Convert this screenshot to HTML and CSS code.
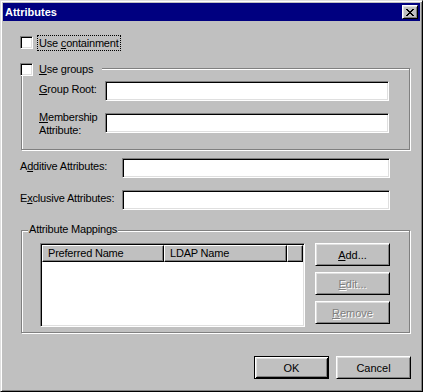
FILE: index.html
```html
<!DOCTYPE html>
<html lang="en">
<head>
  <meta charset="UTF-8" />
  <title>Attributes</title>
  <link rel="stylesheet" href="styles.css">
</head>
<body>
  <div class="window">
    <div class="titlebar">
      <span class="title">Attributes</span>
      <button class="close-btn" type="button">
        <svg width="8" height="7" viewBox="0 0 8 7" shape-rendering="crispEdges">
          <path d="M0 0h2v1H0zM6 0h2v1H6zM1 1h2v1H1zM5 1h2v1H5zM2 2h4v1H2zM3 3h2v1H3zM2 4h4v1H2zM1 5h2v1H1zM5 5h2v1H5zM0 6h2v1H0zM6 6h2v1H6z" fill="#000"/>
        </svg>
      </button>
    </div>

    <div class="dialog">
      <!-- containment -->
      <div class="check-row">
        <input type="checkbox" class="chk">
        <span class="chk-label focus">Use <u>c</u>ontainment</span>
      </div>

      <!-- groups -->
      <div class="group groups-box">
        <div class="check-legend">
          <input type="checkbox" class="chk">
          <span class="chk-label"><u>U</u>se groups</span>
        </div>
        <div class="field-row first">
          <label class="lbl"><u>G</u>roup Root:</label>
          <input type="text" class="edit">
        </div>
        <div class="field-row">
          <label class="lbl two-line"><u>M</u>embership<br>Attribute:</label>
          <input type="text" class="edit">
        </div>
      </div>

      <div class="field-row wide additive">
        <label class="lbl">A<u>d</u>ditive Attributes:</label>
        <input type="text" class="edit">
      </div>
      <div class="field-row wide">
        <label class="lbl">E<u>x</u>clusive Attributes:</label>
        <input type="text" class="edit">
      </div>

      <!-- mappings -->
      <div class="group mappings">
        <div class="text-legend">Attribute Mappings</div>
        <div class="mapping-body">
          <div class="listview">
            <div class="lv-header">
              <div class="lv-col c1">Preferred Name</div>
              <div class="lv-col c2">LDAP Name</div>
              <div class="lv-col c3"></div>
            </div>
          </div>
          <div class="btn-col">
            <button class="btn" type="button"><u>A</u>dd...</button>
            <button class="btn" type="button" disabled><u>E</u>dit...</button>
            <button class="btn" type="button" disabled><u>R</u>emove</button>
          </div>
        </div>
      </div>

      <div class="footer">
        <button class="btn default" type="button">OK</button>
        <button class="btn" type="button">Cancel</button>
      </div>
    </div>
  </div>
</body>
</html>
```

FILE: styles.css
```css
:root {
  --face: #c0c0c0;
  --light: #dfdfdf;
  --shadow: #808080;
  --title: #000080;
}
* { box-sizing: border-box; }
html, body { height: 100%; }
body {
  margin: 0;
  background: var(--face);
  color: #000;
  font-family: "Liberation Sans", Arial, sans-serif;
  font-size: 11px;
  letter-spacing: -0.2px;
}
u { text-decoration: underline; text-underline-offset: 1px; }

.window {
  width: 423px;
  height: 392px;
  display: flex;
  flex-direction: column;
  padding: 2px;
  background: var(--face);
  border: 1px solid;
  border-color: var(--light) #000 #000 var(--light);
  box-shadow: inset 1px 1px #fff, inset -1px -1px var(--shadow);
}

/* caption */
.titlebar {
  height: 18px;
  flex: none;
  display: flex;
  align-items: center;
  justify-content: space-between;
  padding: 0 2px;
  background: var(--title);
  color: #fff;
}
.title { font-weight: bold; line-height: 18px; letter-spacing: 0; }
.close-btn {
  width: 16px;
  height: 14px;
  padding: 0;
  display: flex;
  align-items: center;
  justify-content: center;
  background: var(--face);
  border: 1px solid;
  border-color: #fff #000 #000 #fff;
  box-shadow: inset 1px 1px var(--light), inset -1px -1px var(--shadow);
}

/* body */
.dialog {
  flex: 1;
  display: flex;
  flex-direction: column;
  padding: 14px 10px 0 17px;
}

.check-row { display: flex; align-items: flex-start; height: 16px; }
.chk {
  appearance: none;
  -webkit-appearance: none;
  flex: none;
  width: 13px;
  height: 13px;
  margin: 1px 4px 0 0;
  background: #fff;
  border: 1px solid;
  border-color: var(--shadow) #fff #fff var(--shadow);
  box-shadow: inset 1px 1px #000, inset -1px -1px var(--light);
}
.chk-label {
  line-height: 14px;
  padding: 0 1px;
  border: 1px dotted transparent;
  white-space: nowrap;
}
.chk-label.focus { border-color: #000; }

.group {
  border: 1px solid var(--shadow);
  box-shadow: 1px 1px #fff, inset 1px 1px #fff;
}
.groups-box {
  margin: 17px 0 0 1px;
  padding: 0 20px 16px 17px;
}
.check-legend {
  display: flex;
  align-items: flex-start;
  width: fit-content;
  height: 13px;
  margin: -6px 0 0 -19px;
  padding-right: 7px;
  background: var(--face);
}
.check-legend .chk { margin-top: 0; }
.check-legend .chk-label { margin-top: -2px; }

.field-row { display: flex; align-items: flex-start; margin-top: 12px; }
.field-row.first { margin-top: 5px; }
.lbl {
  flex: none;
  width: 66px;
  padding-top: 2px;
  line-height: 13px;
  white-space: nowrap;
}
.lbl.two-line { padding-top: 0; margin: -2px 0 -4px; }
.field-row.wide { padding-right: 20px; }
.field-row.wide .lbl { width: 102px; }
.field-row.additive { margin-top: 8px; }

.edit {
  flex: 1;
  min-width: 0;
  height: 20px;
  margin: 0;
  padding: 0 2px;
  font: inherit;
  background: #fff;
  border: 1px solid;
  border-color: var(--shadow) #fff #fff var(--shadow);
  box-shadow: inset 1px 1px #000, inset -1px -1px var(--light);
  outline: none;
}

.mappings {
  margin: 20px 0 0 1px;
  padding: 0 19px 5px 18px;
}
.text-legend {
  width: fit-content;
  margin: -8px 0 0 -12px;
  padding: 0 1px;
  line-height: 13px;
  background: var(--face);
}
.mapping-body { display: flex; gap: 10px; margin-top: 7px; }

.listview {
  flex: none;
  width: 265px;
  height: 84px;
  padding: 1px;
  background: #fff;
  border: 1px solid;
  border-color: var(--shadow) #fff #fff var(--shadow);
  box-shadow: inset 1px 1px #000, inset -1px -1px var(--light);
}
.lv-header { display: flex; height: 17px; }
.lv-col {
  height: 17px;
  padding: 0 5px;
  line-height: 15px;
  white-space: nowrap;
  background: var(--face);
  border: 1px solid;
  border-color: #fff #000 #000 #fff;
  box-shadow: inset -1px -1px var(--shadow);
}
.lv-col.c1 { width: 122px; }
.lv-col.c2 { width: 123px; }
.lv-col.c3 { flex: 1; }

.btn-col { margin-left: auto; display: flex; flex-direction: column; gap: 6px; }

.btn {
  width: 75px;
  height: 23px;
  padding: 0;
  font: inherit;
  color: #000;
  background: var(--face);
  border: 1px solid;
  border-color: #fff #000 #000 #fff;
  box-shadow: inset 1px 1px var(--light), inset -1px -1px var(--shadow);
}
.btn:disabled { color: var(--shadow); text-shadow: 1px 1px #fff; }
.btn.default {
  border-color: #000;
  box-shadow: inset 1px 1px #fff, inset -1px -1px #000, inset 2px 2px var(--light), inset -2px -2px var(--shadow);
}

.footer {
  display: flex;
  justify-content: flex-end;
  gap: 7px;
  margin: 23px -1px 0 0;
}
```
